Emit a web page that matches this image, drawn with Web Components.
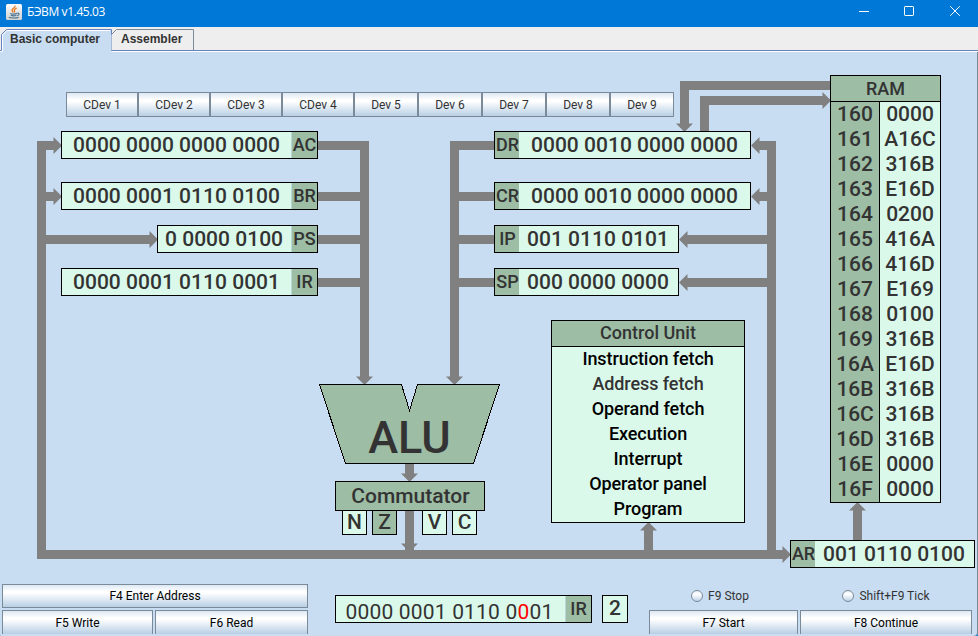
<!DOCTYPE html>
<html lang="en">
<head>
<meta charset="utf-8">
<title>БЭВМ v1.45.03</title>
<style>
html,body{margin:0;padding:0;height:100%;overflow:hidden}
body{font-family:Roboto,sans-serif;color:#333}
</style>
</head>
<body>
<bevm-window></bevm-window>
<script>
const define = (name, css, html) => customElements.define(name, class extends HTMLElement {
  connectedCallback() {
    if (this.shadowRoot) return;
    const t = document.createElement('template');
    t.innerHTML = `<style>*{box-sizing:border-box}${css}</style>${typeof html === 'function' ? html(this) : html}`;
    this.attachShadow({mode: 'open'}).append(t.content.cloneNode(true));
  }
});

/* Title bar with the Java icon and window controls */
define('title-bar', `
:host{display:flex;align-items:center;height:27px;background:#0078d7;color:#fff;padding-left:6px}
.name{flex:1;font:12px/16px "Open Sans","Noto Sans",sans-serif;letter-spacing:-.4px;margin:-3px 0 0 5px}
svg{display:block}
.java{margin-top:-4px}
.ctl{margin-top:-5px}
`, `
<svg class="java" width="16" height="16" viewBox="0 0 16 16">
<defs><linearGradient id="g" x2="0" y2="1"><stop offset="0" stop-color="#fdfdfd"/><stop offset="1" stop-color="#cfcfcf"/></linearGradient></defs>
<rect width="16" height="16" rx="1.5" fill="url(#g)"/>
<path d="M9.2 1.6C9.6 3.8 5.6 4.6 6 6.4c.1.7.9 1.3 1.3 2M10.7 4.2C8.6 5 8 5.7 8.5 6.6c.3.6.2 1.100-.3 1.800" fill="none" stroke="#e8771c" stroke-width="1.300"/>
<path d="M4.200 9.400c1.500.7 5 .7 6.800 0M4.800 11.300c1.500.6 4 .6 5.600 0M11.300 9.200c2.300-.7 2.300 1.800-.2 2.300M2.800 13.300c2.500 1 7.400 1 9.800-.1" fill="none" stroke="#4a7391" stroke-width="1.150"/>
</svg>
<span class="name">БЭВМ v1.45.03</span>
<svg class="ctl" width="124" height="12" viewBox="854 5 124 12" fill="none" stroke="#fff"><path d="M859 11.500h10M950.200 6.200l9.600 9.600M959.800 6.200l-9.600 9.600"/><rect x="904.500" y="6.500" width="9" height="9" rx=".6"/></svg>
`);

define('tab-item', `
:host{display:block;position:relative;height:21px;width:var(--w);font:bold 12px/20px "Liberation Sans",Arial,sans-serif;padding-left:var(--pad,9px)}
svg{position:absolute;inset:0;overflow:visible}
span{position:relative}
`, el => {
  const w = +el.getAttribute('w'), on = el.hasAttribute('active');
  const h = on ? 23 : 21;
  return `<svg width="${w}" height="${h}"><path d="M.5 ${h}V5.500L5.500 .5H${w - .5}V${h}z" fill="${on ? '#c8ddf2' : '#eee'}"/>
<path d="${on ? `M.5 21V5.500L5.500 .5H${w - .5}V21.500` : `M.5 5.500L5.500 .5H${w - .5}V21`}" fill="none" stroke="${on ? '#6382bf' : '#7a8a99'}"/>
${on ? `<path d="M1.500 23V6L6 1.500H${w - 2}" fill="none" stroke="#fff"/>` : ''}</svg><span><slot></slot></span>`;
});

define('tab-strip', `
:host{display:flex;height:25px;background:linear-gradient(#eee 23px,#6382bf 23px 24px,#fff 24px);padding:2px 0 0 1px;position:relative}
`, `<slot></slot>`);

define('metal-button', `
:host{display:flex;align-items:center;justify-content:center;height:var(--h,25px);border:1px solid #7a8a99;
background:linear-gradient(#dde8f3,#fff 30%,#fff 36%,#b8cfe5);font:12px/14px Roboto,sans-serif;white-space:nowrap}
:host([cut]){border-bottom:0}
:host([dark]){color:#000}
`, `<slot></slot>`);

define('device-row', `
:host{display:grid;grid-template-columns:repeat(4,72px) repeat(5,64px);width:608px}
`, () => [1,2,3,4].map(n => `<metal-button>CDev ${n}</metal-button>`).join('') + [5,6,7,8,9].map(n => `<metal-button>Dev ${n}</metal-button>`).join(''));

/* Register: value cell plus a name cell on either side */
define('cpu-register', `
:host{display:flex;height:28px;border:1px solid #000;background:#dbf9eb}
.name{width:25px;background:#9dbda5;font:500 18px/26px Roboto,sans-serif;white-space:nowrap;display:flex;justify-content:center}
.left{width:24px;padding-left:1px}
.right{box-shadow:-1px 0 #b8d8d8}
.value{flex:1;font:500 21px/26px Roboto,sans-serif;white-space:pre;padding-left:var(--pad,11px);letter-spacing:.02px}
:host([edit]) .value{font-weight:400;letter-spacing:.18px;padding-top:3px}
:host([edit]) .name{line-height:25px}
`, el => {
  const left = el.getAttribute('side') === 'left';
  const name = `<div class="name ${left ? 'left' : 'right'}">${el.getAttribute('name')}</div>`;
  return (left ? name : '') + `<div class="value"><slot></slot></div>` + (left ? '' : name);
});

define('flag-box', `
:host{display:flex;justify-content:center;width:25px;height:25px;border:1px solid #000;background:#dbf9eb;font:500 21px/23px Roboto,sans-serif}
:host([set]){background:#9dbda5}
`, `<slot></slot>`);

define('commutator-box', `
:host{display:block;width:150px}
.head{height:30px;border:1px solid #000;background:#9dbda5;text-align:center;font:500 21px/28px Roboto,sans-serif;padding-left:1px}
.flags{display:flex;gap:5px;padding-left:7px;margin-top:-1px}
.gap{margin-left:20px}
`, `<div class="head">Commutator</div><div class="flags"><flag-box>N</flag-box><flag-box set>Z</flag-box><flag-box class="gap">V</flag-box><flag-box>C</flag-box></div>`);

define('control-unit', `
:host{display:block;width:194px;border:1px solid #000;background:#dbf9eb;text-align:center;font:500 18px/25px Roboto,sans-serif;color:#000}
.head{height:26px;background:#9dbda5;border-bottom:1px solid #000;color:#333;line-height:24px}
.row{height:25px;line-height:24px;letter-spacing:-.08px}
.active{color:#333}
`, `<div class="head">Control Unit</div>` + ['Instruction fetch','Address fetch','Operand fetch','Execution','Interrupt','Operator panel','Program']
  .map((s, i) => `<div class="row${i === 1 ? ' active' : ''}">${s}</div>`).join(''));

define('ram-table', `
:host{display:block;width:111px;border:1px solid #000;background:#dbf9eb}
.head{height:26px;background:#9dbda5;border-bottom:1px solid #000;text-align:center;font:500 18px/25px Roboto,sans-serif}
.row{display:grid;grid-template-columns:49px 60px;height:25px;font:500 21px/25px Roboto,sans-serif;text-align:center}
.addr{background:#9dbda5;border-right:1px solid #000}
`, () => `<div class="head">RAM</div>` + '0000 A16C 316B E16D 0200 416A 416D E169 0100 316B E16D 316B 316B 316B 0000 0000'.split(' ')
  .map((v, i) => `<div class="row"><div class="addr">16${i.toString(16).toUpperCase()}</div><div>${v}</div></div>`).join(''));

define('radio-item', `
:host{display:flex;align-items:center;justify-content:center;gap:5px;font:12px/14px Roboto,sans-serif}
svg{display:block}
`, `<svg width="12" height="12"><defs><linearGradient id="r" x2="0" y2="1"><stop offset="0" stop-color="#e4edf6"/><stop offset=".35" stop-color="#fff"/><stop offset="1" stop-color="#b8cfe5"/></linearGradient></defs><circle cx="6" cy="6" r="5.500" fill="url(#r)" stroke="#7a8a99"/></svg><slot></slot>`);

/* Data-path diagram: buses in one SVG layer, nodes pinned over it */
const right = (x, y) => `M${x} ${y}l-8.500-8.500v17z`;
const left = (x, y) => `M${x} ${y}l8.500-8.500v17z`;
const down = (x, y) => `M${x} ${y}l-8.500-8.500h17z`;
const up = (x, y) => `M${x} ${y}l-8.500 8.500h17z`;
define('data-path', `
:host{display:block;position:relative;height:532px}
svg{position:absolute;inset:0}
.node{position:absolute;left:calc(var(--x)*1px);top:calc(var(--y)*1px - 52px);width:var(--w)}
text{font:500 45px Roboto,sans-serif;fill:#333}
`, () => `
<svg width="978" height="532" viewBox="0 52 978 532">
<g fill="none" stroke="#808080" stroke-width="9" shape-rendering="crispEdges">
<path d="M54 145.500H41.500V554.500H783M41.500 196.500H54M41.500 239.500H150"/>
<path d="M318 145.500H364.500V378M318 196.500H364.500M318 239.500H364.500M318 282.500H364.500"/>
<path d="M494 145.500H454.500V378M494 196.500H454.500M494 239.500H454.500M494 282.500H454.500"/>
<path d="M759 145.500H771.500V554.500M759 196.500H771.500M687 239.500H771.500M687 282.500H771.500"/>
<path d="M831 85.500H684.500V124M704.500 132V100.500H823M409.500 463V474M409.500 510V552M648.500 554V530M857.500 541V510"/>
</g>
<path fill="#808080" d="${right(62,145.5)}${right(62,196.5)}${right(158,239.5)}${down(364.5,385)}${down(454.5,385)}${left(751,145.5)}${left(751,196.5)}${left(679,239.5)}${left(679,282.5)}${down(684.5,132)}${right(831,100.5)}${down(409.5,482)}${down(409.5,552)}${up(648.5,522)}${up(857.5,502)}${right(791,554.5)}"/>
<path d="M319.500 384.500H401.500L409.500 410.500L417.500 384.500H499.500L473.500 463.500H345.500z" fill="#9dbda5" stroke="#000" stroke-width="1" shape-rendering="crispEdges"/>
<text x="409.500" y="453" text-anchor="middle">ALU</text>
</svg>
<device-row class="node" style="--x:66;--y:92"></device-row>
<cpu-register class="node" name="AC" style="--x:61;--y:131;--w:257px">0000 0000 0000 0000</cpu-register>
<cpu-register class="node" name="BR" style="--x:61;--y:182;--w:257px">0000 0001 0110 0100</cpu-register>
<cpu-register class="node" name="PS" style="--x:157;--y:225;--w:161px;--pad:7px">0 0000 0100</cpu-register>
<cpu-register class="node" name="IR" style="--x:61;--y:268;--w:257px">0000 0001 0110 0001</cpu-register>
<cpu-register class="node" side="left" name="DR" style="--x:494;--y:131;--w:257px;--pad:12px">0000 0010 0000 0000</cpu-register>
<cpu-register class="node" side="left" name="CR" style="--x:494;--y:182;--w:257px;--pad:12px">0000 0010 0000 0000</cpu-register>
<cpu-register class="node" side="left" name="IP" style="--x:494;--y:225;--w:185px;--pad:8px">001 0110 0101</cpu-register>
<cpu-register class="node" side="left" name="SP" style="--x:494;--y:268;--w:185px;--pad:8px">000 0000 0000</cpu-register>
<cpu-register class="node" side="left" name="AR" style="--x:790;--y:540;--w:185px;--pad:8px">001 0110 0100</cpu-register>
<commutator-box class="node" style="--x:335;--y:481;--w:150px"></commutator-box>
<control-unit class="node" style="--x:551;--y:320;--w:194px"></control-unit>
<ram-table class="node" style="--x:830;--y:75;--w:111px"></ram-table>
`);

define('digit-box', `
:host{display:block;flex:none;width:26px;height:28px;border:1px solid #000;background:#dbf9eb;text-align:center;font:500 21px/24px Roboto,sans-serif}
`, `<slot></slot>`);

define('operator-panel', `
:host{display:flex;height:52px;padding-left:2px}
.keys{display:grid;grid-template-columns:151px 153px;gap:2px;grid-template-rows:24px 24px;--h:24px}
.wide{grid-column:1/3}
.input{display:flex;gap:10px;padding-top:11px;margin:0 21px 0 27px}
cpu-register{width:257px;flex:none}
.run{display:grid;grid-template-columns:149px 172px;gap:2px;grid-template-rows:24px 24px;--h:24px}
radio-item{height:23px}
`, `
<div class="keys"><metal-button class="wide" dark>F4 Enter Address</metal-button><metal-button cut dark>F5 Write</metal-button><metal-button cut dark>F6 Read</metal-button></div>
<div class="input"><cpu-register edit name="IR" style="--pad:9.5px">0000 0001 0110 0<b style="font-weight:inherit;color:#f00">0</b>01</cpu-register><digit-box>2</digit-box></div>
<div class="run"><radio-item style="padding-right:7px">F9 Stop</radio-item><radio-item>Shift+F9 Tick</radio-item><metal-button cut dark>F7 Start</metal-button><metal-button cut dark>F8 Continue</metal-button></div>
`);

define('bevm-window', `
:host{display:flex;flex-direction:column;width:978px;height:636px;background:#0078d7}
main{flex:1;background:#c8ddf2;box-shadow:inset -1px 0 #7a8a99;border-radius:0 0 4px 1px}
`, `
<title-bar></title-bar>
<tab-strip><tab-item active w="111" style="--w:110px">Basic computer</tab-item><tab-item w="83" style="--w:83px;--pad:10px">Assembler</tab-item></tab-strip>
<main><data-path></data-path><operator-panel></operator-panel></main>
`);
</script>
</body>
</html>
